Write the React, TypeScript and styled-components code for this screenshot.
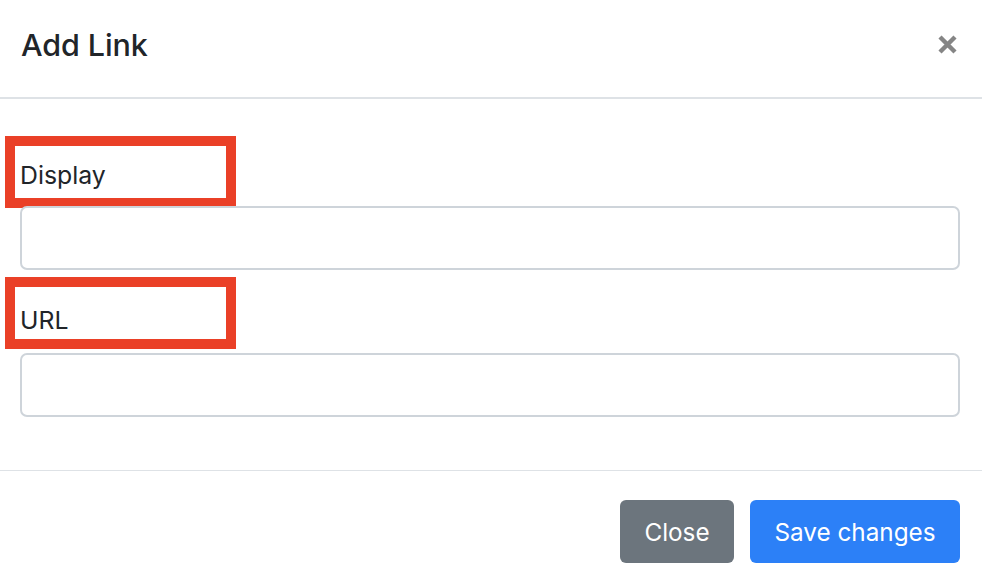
import React from "react";
import styled, { createGlobalStyle } from "styled-components";

const Global = createGlobalStyle`
  html, body { margin: 0; padding: 0; background: #fff; }
  body { font-family: Inter, "Noto Sans", "Liberation Sans", sans-serif; color: #212529; }
  * { box-sizing: border-box; }
`;

const Modal = styled.div`
  width: 982px;
  height: 582px;
  display: flex;
  flex-direction: column;
  background: #fff;
  overflow: hidden;
`;

const Header = styled.div`
  height: 99px;
  display: flex;
  align-items: center;
  justify-content: space-between;
  padding: 0 24px 8px 21px;
  border-bottom: 2px solid #dee2e6;
`;

const Title = styled.h5`
  margin: 0;
  font-size: 30.5px;
  font-weight: 500;
  letter-spacing: -0.1px;
  color: #212529;
`;

const CloseX = styled.button`
  border: 0;
  background: transparent;
  padding: 0;
  width: 21px;
  height: 21px;
  display: flex;
  align-items: center;
  justify-content: center;
  cursor: pointer;
`;

const Body = styled.div`
  height: 372px;
  padding: 37px 22px 0 20px;
  display: flex;
  flex-direction: column;
  border-bottom: 1px solid #dee2e6;
`;

const Group = styled.div<{ $mb: number }>`
  display: flex;
  flex-direction: column;
  margin-bottom: ${(p) => p.$mb}px;
`;

const LabelBox = styled.label<{ $mb: number; $pt: number }>`
  display: flex;
  align-items: center;
  width: 231px;
  height: 72px;
  margin-left: -15px;
  margin-bottom: ${(p) => p.$mb}px;
  padding: ${(p) => p.$pt}px 0 0 5px;
  border: 10px solid #ea4027;
  font-size: 24.8px;
  font-weight: 400;
  color: #212529;
`;

const Input = styled.input`
  width: 100%;
  height: 64px;
  border: 2px solid #ced4da;
  border-radius: 7px;
  background: #fff;
  font-size: 24px;
  padding: 0 18px;
  outline: none;
  font-family: inherit;
`;

const Footer = styled.div`
  flex: 1;
  display: flex;
  justify-content: flex-end;
  align-items: flex-start;
  gap: 16px;
  padding: 29px 22px 0 0;
`;

const Button = styled.button<{ $variant: "secondary" | "primary"; $w: number }>`
  width: ${(p) => p.$w}px;
  height: 63px;
  border: 0;
  border-radius: 6px;
  font-family: inherit;
  font-size: 24.3px;
  font-weight: 400;
  color: #fff;
  background: ${(p) => (p.$variant === "primary" ? "#2c80f7" : "#6c757d")};
  cursor: pointer;
`;

export default function App() {
  return (
    <>
      <Global />
      <Modal>
        <Header>
          <Title>Add Link</Title>
          <CloseX aria-label="Close">
            <svg width="21" height="21" viewBox="0 0 21 21">
              <path d="M3 3 L18 18 M18 3 L3 18" stroke="#858585" strokeWidth="4.4" strokeLinecap="butt" />
            </svg>
          </CloseX>
        </Header>
        <Body>
          <Group $mb={7}>
            <LabelBox $mb={-2} $pt={6}>Display</LabelBox>
            <Input type="text" />
          </Group>
          <Group $mb={0}>
            <LabelBox $mb={4} $pt={13}>URL</LabelBox>
            <Input type="text" />
          </Group>
        </Body>
        <Footer>
          <Button $variant="secondary" $w={114}>Close</Button>
          <Button $variant="primary" $w={210}>Save changes</Button>
        </Footer>
      </Modal>
    </>
  );
}
